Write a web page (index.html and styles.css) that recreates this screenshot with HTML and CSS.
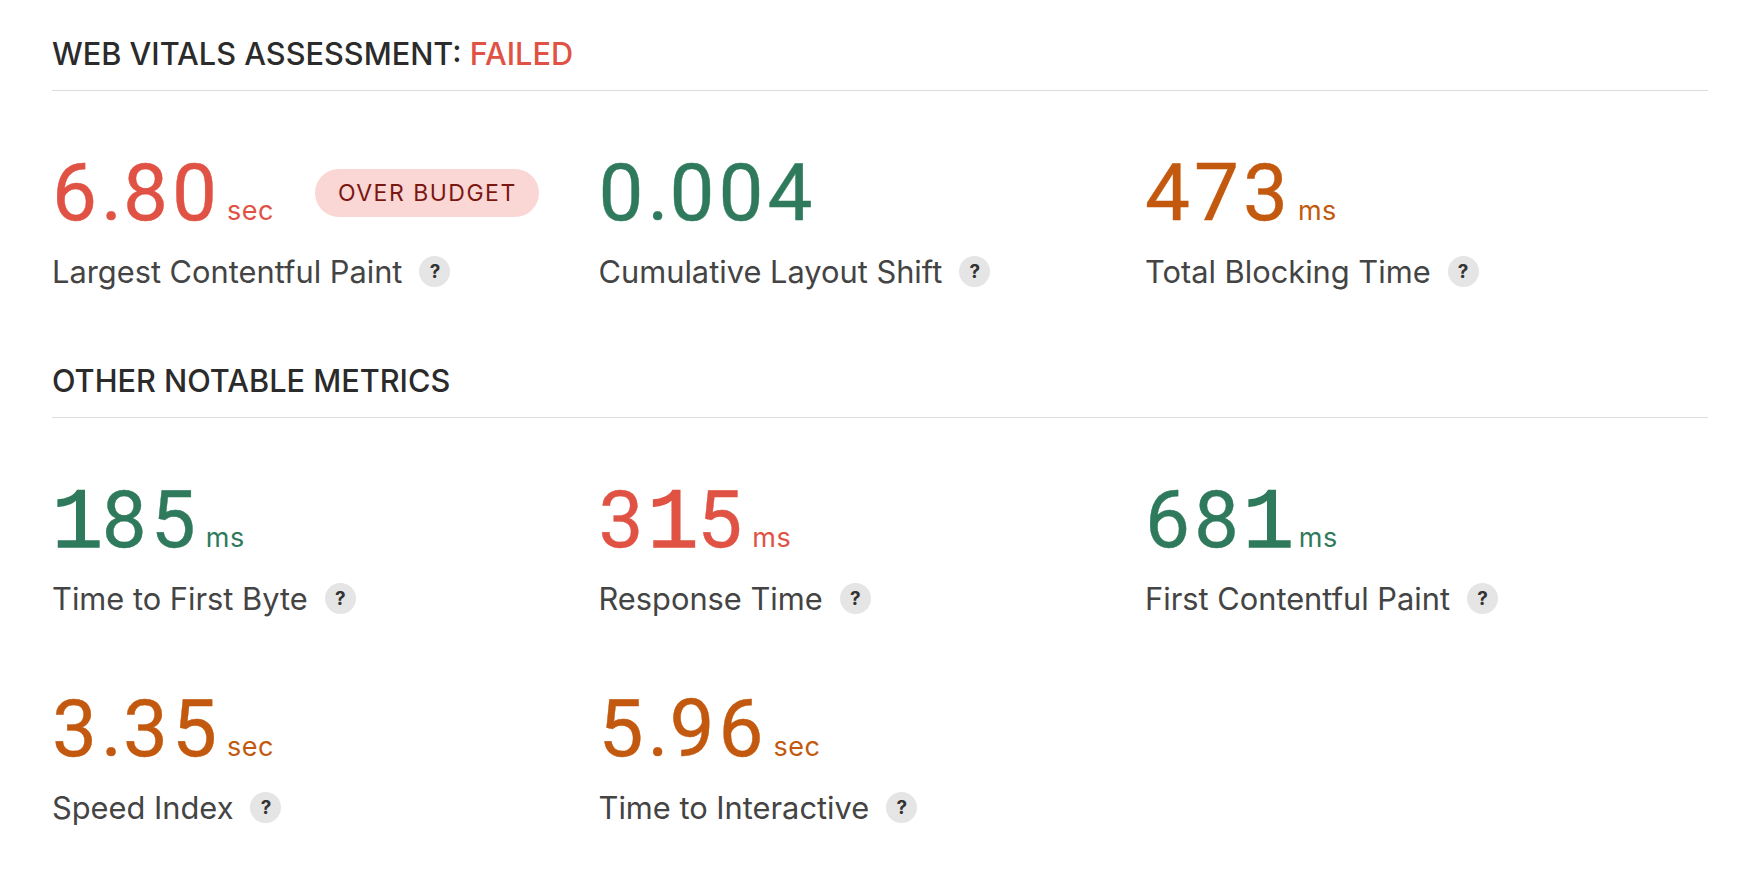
FILE: index.html
```html
<!DOCTYPE html>
<html lang="en">
<head>
<meta charset="utf-8">
<title>Web Vitals</title>
<link rel="stylesheet" href="styles.css">
</head>
<body>
<main class="page">
  <h2 class="heading">WEB VITALS ASSESSMENT: <span class="bad">FAILED</span></h2>
  <section class="grid">
    <div class="metric">
      <div class="value bad"><span class="num">6<span class="dot">.</span>80</span><span class="unit">sec</span><span class="badge">OVER BUDGET</span></div>
      <div class="label">Largest Contentful Paint <span class="help">?</span></div>
    </div>
    <div class="metric">
      <div class="value good"><span class="num">0<span class="dot">.</span>004</span></div>
      <div class="label">Cumulative Layout Shift <span class="help">?</span></div>
    </div>
    <div class="metric">
      <div class="value warn"><span class="num">473</span><span class="unit">ms</span></div>
      <div class="label">Total Blocking Time <span class="help">?</span></div>
    </div>
  </section>
  <h2 class="heading">OTHER NOTABLE METRICS</h2>
  <section class="grid">
    <div class="metric">
      <div class="value good"><span class="num"><span class="one">1</span>85</span><span class="unit">ms</span></div>
      <div class="label">Time to First Byte <span class="help">?</span></div>
    </div>
    <div class="metric">
      <div class="value bad"><span class="num">3<span class="one">1</span>5</span><span class="unit">ms</span></div>
      <div class="label">Response Time <span class="help">?</span></div>
    </div>
    <div class="metric">
      <div class="value good"><span class="num">68<span class="one">1</span></span><span class="unit">ms</span></div>
      <div class="label">First Contentful Paint <span class="help">?</span></div>
    </div>
    <div class="metric">
      <div class="value warn"><span class="num">3<span class="dot">.</span>35</span><span class="unit">sec</span></div>
      <div class="label">Speed Index <span class="help">?</span></div>
    </div>
    <div class="metric">
      <div class="value warn"><span class="num">5<span class="dot">.</span>96</span><span class="unit">sec</span></div>
      <div class="label">Time to Interactive <span class="help">?</span></div>
    </div>
  </section>
</main>
</body>
</html>
```
FILE: styles.css
```css
* { box-sizing: border-box; }
html, body { margin: 0; background: #fff; }
body { height: 874px; overflow: hidden; font-family: Inter, "Liberation Sans", sans-serif; color: #2e2e2e; }
.page { width: 1760px; padding: 36px 52px 0; }
.heading { margin: 0; height: 55px; font-size: 30.7px; line-height: 36px; font-weight: 500; color: #2b2b2b; border-bottom: 1px solid #dcdcdc; }
.grid { display: grid; grid-template-columns: 546.5px 546.5px 1fr; row-gap: 73px; padding: 62px 0 74px; }
.bad { color: #e05244; }
.good { color: #2f7a5c; }
.warn { color: #c2590f; }
.value { display: flex; align-items: baseline; height: 80px; line-height: 80px; }
.num { font-family: Roboto, "Liberation Sans", sans-serif; font-size: 80px; letter-spacing: 4px; -webkit-text-stroke: .4px; }
.dot { letter-spacing: 1px; }
.one { font-family: "Liberation Mono", monospace; font-size: 85px; letter-spacing: -1.2px; -webkit-text-stroke: 1.5px; }
.unit { font-size: 27px; margin-left: 6px; letter-spacing: .5px; }
.badge { align-self: center; margin-left: 41px; padding: 0 22px 0 23px; height: 48px; line-height: 48px; border-radius: 24px; background: #fad7d5; color: #7a1712; font-size: 23px; letter-spacing: 1.5px; }
.label { display: flex; align-items: center; gap: 17px; margin-top: 20px; height: 36px; font-size: 30.8px; color: #444; }
.help { width: 31px; height: 31px; border-radius: 50%; background: #e5e5e5; color: #333; font-size: 19px; font-weight: 700; display: flex; align-items: center; justify-content: center; }
```
